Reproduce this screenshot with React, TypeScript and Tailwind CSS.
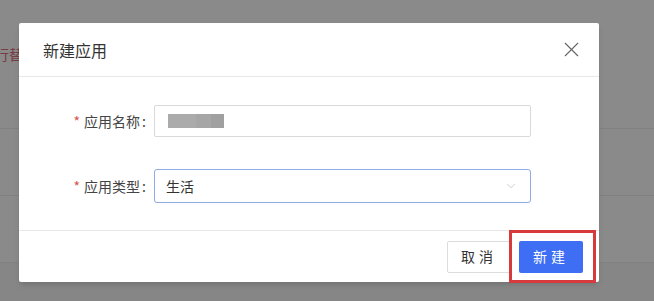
import { X, ChevronDown } from "lucide-react";

const font = { fontFamily: '"Noto Sans CJK SC", "Noto Sans", sans-serif' };

function BackgroundPage() {
  // the list page behind the modal mask
  return (
    <div className="h-[301px] w-[654px] bg-white pt-[41px]">
      <div className="h-[87px]">
        <span className="ml-[-5px] text-[14px] leading-[18px] text-[#e0707a]">行替换</span>
      </div>
      <div className="h-[67px] border-t border-[#efefef]" />
      <div className="h-[67px] border-t border-[#efefef]" />
      <div className="h-[39px] border-t border-[#efefef] bg-[#f7f7f7]" />
    </div>
  );
}

function Field({ label, children }: { label: string; children: React.ReactNode }) {
  return (
    <div className="flex items-center">
      <div className="flex w-[135px] items-center justify-end pr-[8px] text-[14px] text-[#444]">
        <span className="mr-[4px] text-[14px] text-[#d9534f]">*</span>
        {label}
        <span className="ml-[2px]">:</span>
      </div>
      {children}
    </div>
  );
}

export default function App() {
  return (
    <div className="relative h-[301px] w-[654px] overflow-hidden" style={font}>
      <BackgroundPage />
      <div className="absolute inset-0 bg-black/[0.46]" />

      {/* modal */}
      <div className="absolute left-[19px] top-[23px] w-[580px] rounded-[2px] bg-white shadow-md">
        <div className="flex h-[54px] items-center justify-between border-b border-[#e8e8e8] pl-[24px] pr-[15px]">
          <span className="text-[16px] text-[#333]">新建应用</span>
          <X size={25} strokeWidth={1.1} className="text-[#666]" />
        </div>

        <div className="flex flex-col gap-[32px] pb-[27px] pt-[28px]">
          <Field label="应用名称">
            <div className="flex h-[32px] w-[377px] items-center rounded-[2px] border border-[#d9d9d9] px-[13px]">
              <div className="flex h-[14px] blur-[0.6px]">
                <div className="w-[28px] bg-[#ababab]" />
                <div className="w-[15px] bg-[#a6a6a6]" />
                <div className="w-[13px] bg-[#a0a0a0]" />
              </div>
            </div>
          </Field>
          <Field label="应用类型">
            <div className="flex h-[34px] w-[377px] items-center justify-between rounded-[3px] border border-[#8fabe6] pl-[11px] pr-[12px] text-[14px] text-[#333]">
              <span>生活</span>
              <ChevronDown size={14} strokeWidth={1.2} className="text-[#bbb]" />
            </div>
          </Field>
        </div>

        <div className="flex h-[52px] items-center justify-end gap-[8px] border-t border-[#e8e8e8] pr-[16px]">
          <button className="h-[32px] w-[64px] rounded-[2px] border border-[#dcdcdc] bg-white text-[14px] tracking-[4px] text-[#333]">
            取消
          </button>
          <button className="h-[32px] w-[64px] rounded-[2px] bg-[#3d6ef4] text-[14px] tracking-[4px] text-white">
            新建
          </button>
        </div>
      </div>

      {/* annotation box */}
      <div className="absolute left-[509px] top-[230px] h-[53px] w-[87px] border-[3px] border-[#d63a3c]" />
    </div>
  );
}
